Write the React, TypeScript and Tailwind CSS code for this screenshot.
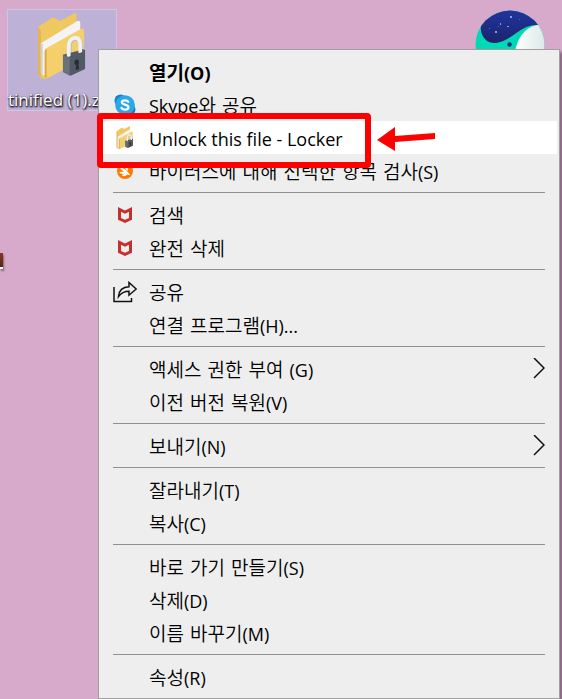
import { clsx } from "clsx";
import type { ReactNode } from "react";

type MenuEntry = {
  label: string;
  icon?: ReactNode;
  bold?: boolean;
  active?: boolean;
  submenu?: boolean;
};

function LockedFolderIcon({ className }: { className?: string }) {
  return (
    <svg aria-hidden="true" className={className} viewBox="0 0 52 72">
      <path d="M1 17 Q1 15 3 14 L15 6 Q18 4 20 7 L24 9 L39 1 Q41 0 41 3 V50 L9 69 Q6 70 3 67 L1 64 Z" fill="#f0c860" />
      <path d="M1 16 L4 18 V67 L1 64 Z" fill="#e3b450" />
      <path d="M4 32 L42 9 Q45 8 45 11 V45 L7 66 L4 63 Z" fill="#f4f4f4" />
      <path d="M4 32 L6 33 V66 L4 63 Z" fill="#cfd3d6" />
      <path d="M8 40 Q8 38 10 37 L46 17 Q49 16 49 19 V48 L12 68 Q8 70 8 66 Z" fill="#f4cf6c" />
      <path d="M8 40 L10 38 V68 Q8 69 8 66 Z" fill="#dba947" />
      <path d="M34 46 V36 C34 26 46 24 46 34 V43" fill="none" stroke="#b9bec2" strokeWidth="4" />
      <path d="M33 46 V35 C33 25 45 23 45 33 V42" fill="none" stroke="#f0f1f2" strokeWidth="4" />
      <path d="M27 44 L31 43 V46 Q33 47 35 45 V42 L43 40 V42 Q45 43 47 41 V38 L50 39 V59 L35 66 L27 62 Z" fill="#525b65" />
      <path d="M27 44 L34 47 V66 L27 62 Z" fill="#69727c" />
      <path d="M42 49 a2.5 3 0 0 1 1 5 l1 5 l-4 1 l1 -5 a2.5 3 0 0 1 1 -6" fill="#272d34" />
    </svg>
  );
}

function SkypeIcon() {
  return (
    <svg aria-hidden="true" className="h-[22px] w-[22px]" viewBox="0 0 22 22">
      <circle cx="6.5" cy="6.5" r="6" fill="#1680c4" />
      <circle cx="15.5" cy="15.5" r="6" fill="#1680c4" />
      <circle cx="11" cy="11" r="9.8" fill="#28a8ea" />
      <path
        d="M14.3 7.8 C13.5 6.2 8 5.4 7.9 8.4 C7.8 11.2 14.4 10 14.4 13.2 C14.4 16.4 8.4 16.2 7.5 13.9"
        fill="none"
        stroke="#fff"
        strokeLinecap="round"
        strokeWidth="2.3"
      />
    </svg>
  );
}

function AvastIcon() {
  return (
    <svg aria-hidden="true" className="h-4 w-4" viewBox="0 0 16 16">
      <circle cx="8" cy="8" r="8" fill="#ff7800" />
      <path d="M3 3.5 L9 7 L13 11.5 Q12 12.5 10.5 11.5 L3.5 6 Z" fill="#fff" />
      <path d="M2.5 9 L8 8.5 L10.5 11.5 Q7 14.5 4.5 12 L7.5 11 L3 10.5 Z" fill="#fff" />
      <path d="M8.5 3 Q11 3.5 11 8 L8.5 6 Z" fill="#fff" />
    </svg>
  );
}

function McAfeeIcon() {
  return (
    <svg aria-hidden="true" className="h-4 w-[14px]" viewBox="0 0 14 16">
      <path
        d="M0 0 L7 3.4 L14 0 V12.8 L7 16 L0 12.8 Z M3 4.8 V10.9 L7 12.8 L11 10.9 V4.8 L7 6.7 Z"
        fill="#c5302f"
        fillRule="evenodd"
      />
    </svg>
  );
}

function ShareIcon() {
  return (
    <svg aria-hidden="true" className="h-[22px] w-6" fill="none" stroke="#111" strokeWidth="1.5" viewBox="0 0 24 22">
      <path d="M1 6 V20.5 H18.5 V17" />
      <path d="M5.5 15.5 C6 9 10 6 16 5.8 V1.5 L23.2 8 L16 14.2 V10.2 C11 10.2 8 12 5.5 15.5 Z" />
    </svg>
  );
}

function WhaleIcon() {
  return (
    <svg aria-hidden="true" className="h-[70px] w-[70px]" viewBox="0 0 70 70">
      <defs>
        <clipPath id="whale-disc">
          <circle cx="35" cy="35" r="34.5" />
        </clipPath>
        <linearGradient id="whale-sky" x1="0" x2="0" y1="0" y2="1">
          <stop offset="0" stopColor="#20359f" />
          <stop offset="1" stopColor="#1b236a" />
        </linearGradient>
        <linearGradient id="whale-belly" x1="0" x2="1" y1="0" y2="0">
          <stop offset="0" stopColor="#fff" />
          <stop offset="1" stopColor="#dce9e8" />
        </linearGradient>
      </defs>
      <g clipPath="url(#whale-disc)">
        <rect width="70" height="70" fill="#00d9b5" />
        <path d="M6 0 H70 V15 H62 C44 15 35 33 19 33 C7 32 5 21 6 14 Z" fill="url(#whale-sky)" />
        <path d="M62 15 C48 18 42 30 40 42 V70 H70 V15 Z" fill="url(#whale-belly)" />
        <circle cx="34.5" cy="34.5" r="2.2" fill="#142779" />
        <path d="M35 6 h2 v2 h-2z M25 13 h1 v2 h-1z M20 21 h2 v2 h-2z M32 16 h2 v1 h-2z" fill="#8c9edb" />
        <path d="M44 9 h1 v1 h-1z M14 18 h1 v1 h-1z M23 16 h1 v1 h-1z" fill="#5366b3" />
      </g>
    </svg>
  );
}

const menuGroups: MenuEntry[][] = [
  [
    { label: "열기(O)", bold: true },
    { label: "Skype와 공유", icon: <SkypeIcon /> },
    {
      label: "Unlock this file - Locker",
      icon: <LockedFolderIcon className="h-6 w-[18px]" />,
      active: true,
    },
    { label: "바이러스에 대해 선택한 항목 검사(S)", icon: <AvastIcon /> },
  ],
  [
    { label: "검색", icon: <McAfeeIcon /> },
    { label: "완전 삭제", icon: <McAfeeIcon /> },
  ],
  [
    { label: "공유", icon: <ShareIcon /> },
    { label: "연결 프로그램(H)..." },
  ],
  [
    { label: "액세스 권한 부여 (G)", submenu: true },
    { label: "이전 버전 복원(V)" },
  ],
  [{ label: "보내기(N)", submenu: true }],
  [{ label: "잘라내기(T)" }, { label: "복사(C)" }],
  [
    { label: "바로 가기 만들기(S)" },
    { label: "삭제(D)" },
    { label: "이름 바꾸기(M)" },
  ],
  [{ label: "속성(R)" }],
];

/* Hangul runs are set one step larger and lighter than the Latin around them */
function Label({ text, bold }: { text: string; bold?: boolean }) {
  return text.split(/([가-힣][가-힣 ]*)/).map((run, index) =>
    index % 2 === 1 ? (
      <span
        key={index}
        className={clsx(
          "font-['DejaVu_Sans','Noto_Sans_CJK_KR',sans-serif] text-[19px]/[28px]",
          bold ? "font-bold" : "font-[350]",
        )}
      >
        {run}
      </span>
    ) : (
      run
    ),
  );
}

function MenuItem({ label, icon, bold, active, submenu }: MenuEntry) {
  return (
    <li className="relative" role="none">
      <button
        className={clsx("flex h-[33px] w-full items-center text-left", active && "bg-white")}
        role="menuitem"
        type="button"
      >
        <span className="flex w-12 shrink-0 justify-center">{icon}</span>
        <span className={clsx("grow pt-0.5 whitespace-nowrap", bold && "font-bold")}>
          <Label bold={bold} text={label} />
        </span>
        {submenu && (
          <svg aria-hidden="true" className="mr-3 h-[22px] w-3" fill="none" stroke="#111" strokeWidth="1.5" viewBox="0 0 12 22">
            <path d="M1 0 L11 10 L1 20" />
          </svg>
        )}
      </button>
      {active && <Callout />}
    </li>
  );
}

/* Red frame and arrow drawn over the highlighted entry */
function Callout() {
  return (
    <div className="pointer-events-none absolute -top-2 -left-1 z-10 flex items-center gap-1.5">
      <div className="h-[55px] w-[274px] rounded-sm border-[6px] border-[#fe0000]" />
      <svg aria-hidden="true" className="mb-1 h-6 w-[60px]" viewBox="0 0 60 24">
        <path d="M0 13 L18 0 V9 L58 6 V12 L18 15 V24 Z" fill="#fe0000" />
      </svg>
    </div>
  );
}

export default function App() {
  return (
    <main className="relative min-h-screen overflow-hidden bg-[#d7a9ca] pt-[49px] pr-0.5 pl-[98px] font-['Open_Sans','Noto_Sans_CJK_KR',sans-serif]">
      {/* Desktop shortcuts */}
      <div className="absolute top-[9px] left-[7px] flex h-[102px] w-[110px] flex-col items-center border border-[#cbc5e6] bg-[#beb1d6]">
        <LockedFolderIcon className="mt-0.5 h-[70px] w-[50px] shrink-0" />
        <span className="mt-1.5 w-full whitespace-nowrap text-[17px]/6 text-white [text-shadow:1px_1px_2px_#000,0_1px_2px_#000]">
          tinified (1).zip
        </span>
      </div>
      <div className="absolute top-[10px] left-[475px]">
        <WhaleIcon />
      </div>
      <div className="absolute top-[253px] left-0 h-4 w-[3px] border-b-2 border-b-white bg-linear-to-b from-[#8a351c] to-[#5b2414] shadow-[1px_2px_2px_#85647d]" />

      {/* Context menu */}
      <ul
        className="relative border border-[#a0a0a0] bg-[#eee] py-[5px] text-lg text-black shadow-[3px_3px_3px_#8a6581]"
        role="menu"
      >
        {menuGroups.map((group, index) => (
          <li key={group[0].label} role="none">
            {index > 0 && <hr className="mx-3.5 my-[5px] border-[#919191]" />}
            <ul className="px-0.5" role="group">
              {group.map((entry) => (
                <MenuItem key={entry.label} {...entry} />
              ))}
            </ul>
          </li>
        ))}
      </ul>
    </main>
  );
}
